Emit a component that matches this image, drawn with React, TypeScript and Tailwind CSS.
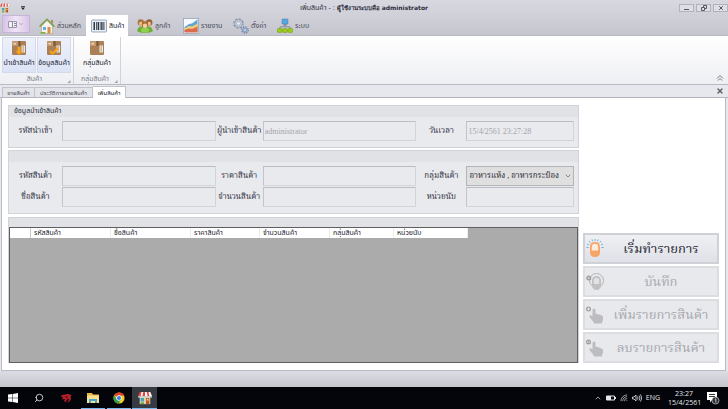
import React, { useState } from 'react';
import { ChevronDown, ChevronUp, Search, X } from 'lucide-react';

const ShopIcon = ({ className }: { className: string }) => (
  <svg viewBox="0 0 16 16" className={className}>
    <path d="M2 6h12v9H2z" fill="#e9dcb8" />
    <path d="M2 1h12l2 5H0z" fill="#e8433f" />
    <path d="M4 1h2L5 6H3zM8 1h2l1 5H8zM12 1h2l2 5h-3z" fill="#fff" />
    <path d="M0 6h16v1.5H0z" fill="#c9d8d2" />
    <path d="M3 8h4v4H3z" fill="#3fa7b5" />
    <path d="M9 8h4v7H9z" fill="#b5572e" />
    <path d="M10 9h2v2h-2z" fill="#ffd36b" />
    <path d="M3 13h4v2H3z" fill="#6f9c3b" />
  </svg>
);

const HouseIcon = () => (
  <svg viewBox="0 0 16 16" className="h-4 w-4">
    <path d="M2.5 8 8 2.5 13.5 8v7.5h-11z" fill="#f6f3ea" stroke="#a5a08f" strokeWidth=".6" />
    <path d="M12 2h2v4l-2-2z" fill="#b9845a" />
    <path d="M.6 8.600 8 1.200l7.400 7.400" fill="none" stroke="#7d9f4c" strokeWidth="1.500" />
    <path d="M8.500 9h3v6.500h-3z" fill="#d88d45" />
    <path d="M4 9h3v3H4z" fill="#62aee3" />
    <path d="M1.500 14h5v1.600h-5z" fill="#79b53d" />
  </svg>
);

const BarcodeIcon = () => (
  <svg viewBox="0 0 16 16" className="h-4 w-4">
    <rect x=".5" y="2" width="15" height="12" rx=".6" fill="#e8eef7" stroke="#8495ad" strokeWidth=".8" />
    <path d="M2.500 4h1.500v8H2.500zM5 4h.8v8H5zM6.600 4h1.400v8H6.600zM8.800 4h.7v8h-.7zM10.200 4h1.400v8h-1.400zM12.400 4h1v8h-1z" fill="#2f3743" />
  </svg>
);

const CustomersIcon = () => (
  <svg viewBox="0 0 16 16" className="h-4 w-4">
    <path d="M1 11c0-2 3-3 7-3s7 1 7 3l1 2c-2 2.500-14 2.500-16 0z" fill="#6fae35" />
    <path d="M4 13c0-3 1.500-3.500 4-3.500s4 .5 4 3.500c-1 2-7 2-8 0z" fill="#91cf52" />
    <circle cx="3.800" cy="4.500" r="3.200" fill="#a97540" />
    <circle cx="12.200" cy="4.500" r="3.200" fill="#9c6436" />
    <circle cx="4" cy="5.800" r="2" fill="#efc08f" />
    <circle cx="12" cy="5.800" r="2" fill="#efc08f" />
    <circle cx="8" cy="6.500" r="3.200" fill="#a96b36" />
    <circle cx="8" cy="7.800" r="2.200" fill="#f8cfa0" />
  </svg>
);

const ReportIcon = () => (
  <svg viewBox="0 0 16 16" className="h-4 w-4">
    <rect x=".5" y=".5" width="15" height="15" fill="#f6f9fd" stroke="#93a4bb" strokeWidth=".8" />
    <path d="M1.500 9 6 6l3-.5 5.500-4V14h-13z" fill="#5ea5d4" />
    <path d="M1.500 10.500 6 8l3 .5 5.500-3V14h-13z" fill="#f1cd77" />
    <path d="M1.500 12 6 10.500l3 .5 5.500-2.500v6h-13z" fill="#dd6a4d" />
  </svg>
);

const GearsIcon = () => (
  <svg viewBox="0 0 16 16" className="h-4 w-4" fill="none">
    <circle cx="5.500" cy="5.500" r="4.600" stroke="#8490a6" strokeWidth="1.400" strokeDasharray="1.900 1.700" />
    <circle cx="5.500" cy="5.500" r="3" stroke="#c3ccda" strokeWidth="2" />
    <circle cx="5.500" cy="5.500" r="4" stroke="#7f8ca3" strokeWidth=".6" />
    <circle cx="5.500" cy="5.500" r="2" fill="#e4e8ef" stroke="#8c98ad" strokeWidth=".5" />
    <circle cx="12" cy="12" r="3.200" stroke="#62789c" strokeWidth="1.200" strokeDasharray="1.300 1.200" />
    <circle cx="12" cy="12" r="2" stroke="#8ba3c9" strokeWidth="1.600" />
  </svg>
);

const NetworkIcon = () => (
  <svg viewBox="0 0 16 16" className="h-4 w-4">
    <path d="M8 6v3M3 11V8.800h10V11" fill="none" stroke="#7b8794" strokeWidth=".9" />
    <rect x="5" y="1" width="6" height="5" rx=".5" fill="#56a8e2" stroke="#4176a8" strokeWidth=".5" />
    <path d="M6 6.500h4v.8H6z" fill="#6f7b88" />
    <rect x=".3" y="10.500" width="4.800" height="4" rx="1.200" fill="#9ccb1c" stroke="#6c9a12" strokeWidth=".5" />
    <rect x="5.600" y="10.500" width="4.800" height="4" rx="1.200" fill="#9ccb1c" stroke="#6c9a12" strokeWidth=".5" />
    <rect x="10.900" y="10.500" width="4.800" height="4" rx="1.200" fill="#9ccb1c" stroke="#6c9a12" strokeWidth=".5" />
  </svg>
);

const BoxIcon = ({ mark }: { mark: 'down' | 'check' | 'none' }) => (
  <svg viewBox="0 0 16 16" className="h-4 w-4">
    <rect x="1" y="1" width="14" height="14" rx="1" fill="#ab8057" />
    <path d="M1 2c0-1 1-1 1-1h5v5H1z" fill="#c39a70" />
    <path d="M7.500 1h2v5h-2z" fill="#7b5737" />
    <path d="M2.500 3h2.500v1.500H2.500z" fill="#ead9c2" />
    <path d="M10.500 5.500h3.500v7h-3.500z" fill="#efe8dc" />
    <path d="M11.500 7h1.500M11.500 9h1.500M11.500 11h1.500" stroke="#7c6650" strokeWidth=".7" />
    {mark === 'down' && <path d="M6.500 7h3v4h2L8 15l-3.500-4h2z" fill="#f7a21b" />}
    {mark === 'check' && <path d="m4.500 10 2 2 5-5 1 2.500-6 5.500-3-3z" fill="#f7a21b" />}
  </svg>
);

const BulbIcon = () => (
  <svg viewBox="0 0 20 20" className="h-5 w-5">
    <path d="M10 0v2M7 .5l.5 1.700M13 .5l-.5 1.700M4 2l1.200 1.500M16 2l-1.200 1.500M2 5l1.800.8M18 5l-1.800.8M1.500 8.500h2M18.500 8.500h-2" stroke="#5aa6cf" strokeWidth=".9" />
    <rect x="5" y="3" width="10" height="15" rx="4.500" fill="#f6a566" />
    <path d="M6.800 8a3.200 3.200 0 0 1 6.400 0v3.500H6.800z" fill="#fdece0" />
  </svg>
);

const PowerIcon = () => (
  <svg viewBox="0 0 20 20" className="h-5 w-5">
    <circle cx="11.500" cy="8.500" r="7" fill="none" stroke="#b4b4b6" />
    <rect x="7" y="4" width="9" height="14" rx="4.500" fill="#c0c0c2" />
    <path d="M8.800 8.500a2.700 2.700 0 0 1 5.400 0V12H8.800z" fill="#e2e2e4" />
    <circle cx="3.800" cy="6" r="2.500" fill="#9a9a9c" />
    <path d="M2.500 6h2.600M3.800 4.700v2.600" stroke="#e6e6e8" strokeWidth=".7" />
  </svg>
);

const HandIcon = ({ add }: { add?: boolean }) => (
  <svg viewBox="0 0 20 20" className="h-5 w-5">
    <path d="M7.500 5c0-1.800 3-1.800 3 0v4c1.700-.5 2.700 0 3 .7 1.500-.4 2.200.2 2.400.9 1.400 0 2.100.6 2.100 1.600v2.300c0 1.500-1 2-1.200 4H9c-.5-2-3.500-5-4.500-6.500-.8-1.300.9-2.200 1.900-1.300l1.100.9z" fill="#bdbdbf" />
    <circle cx="3.500" cy="4" r="2.500" fill="#9f9fa1" />
    <path d={add ? 'M2 4h3M3.500 2.500v3' : 'M2 4h3'} stroke="#ececee" strokeWidth=".9" />
  </svg>
);

const FolderIcon = () => (
  <svg viewBox="0 0 14 14" className="h-3.5 w-3.5">
    <path d="M1 2h5l1 1.500h6V12H1z" fill="#e8b64a" />
    <path d="M1 4.500h12V12H1z" fill="#fbe08c" />
    <path d="M3 12V8h8v4H9v-2H5v2z" fill="#44a6cf" />
  </svg>
);

const ChromeIcon = () => (
  <svg viewBox="0 0 14 14" className="h-3 w-3">
    <circle cx="7" cy="7" r="6.500" fill="#f7cb1c" />
    <path d="M7 7 1.400 3.700A6.500 6.500 0 0 1 13 4.500H7z" fill="#e5402f" />
    <path d="M1.400 3.700A6.500 6.500 0 0 0 6.600 13.500L9.500 8.500 7 7 4.700 9z" fill="#2f9e4f" />
    <circle cx="7" cy="7" r="3.100" fill="#fff" />
    <circle cx="7" cy="7" r="2.400" fill="#3b7ee8" />
  </svg>
);

const DragonIcon = () => (
  <svg viewBox="0 0 14 14" className="h-3.5 w-3.5">
    <path d="M2 5c1-2 3-1 4-1.500s4-1 5.500.5l1.500.5-1.500 1C13 8 11 11 8 11.500c1.500-1.500 2-2.500 1.500-4L7.500 9 7 11.500 5 10l1-2-3.500.5L4 7z" fill="#b01f27" />
    <path d="m6.500 5.500 2.500.3-2 1.200z" fill="#140607" />
  </svg>
);

const ribbonTabs = [
  { label: 'ส่วนหลัก', icon: <HouseIcon />, width: 'w-[48px]' },
  { label: 'สินค้า', icon: <BarcodeIcon />, width: 'w-[42px]' },
  { label: 'ลูกค้า', icon: <CustomersIcon />, width: 'w-[42px]' },
  { label: 'รายงาน', icon: <ReportIcon />, width: 'w-[46px]' },
  { label: 'ตั้งค่า', icon: <GearsIcon />, width: 'w-[40px]' },
  { label: 'ระบบ', icon: <NetworkIcon />, width: 'w-[42px]' },
];

const columns = [
  { label: 'รหัสสินค้า', width: 'w-[80px]' },
  { label: 'ชื่อสินค้า', width: 'w-[80px]' },
  { label: 'ราคาสินค้า', width: 'w-[69px]' },
  { label: 'จำนวนสินค้า', width: 'w-[70px]' },
  { label: 'กลุ่มสินค้า', width: 'w-[64px]' },
  { label: 'หน่วยนับ', width: 'w-[74px]' },
];

const actions = [
  { label: 'เริ่มทำรายการ', icon: <BulbIcon />, disabled: false },
  { label: 'บันทึก', icon: <PowerIcon />, disabled: true },
  { label: 'เพิ่มรายการสินค้า', icon: <HandIcon add />, disabled: true },
  { label: 'ลบรายการสินค้า', icon: <HandIcon />, disabled: true },
];

const Field = ({ id, label, value = '' }: { id: string; label: string; value?: string }) => (
  <>
    <label htmlFor={id} className="text-center font-['Liberation_Serif','Noto_Serif_Thai',serif] text-[8px] whitespace-nowrap text-[#2c2d3c]">{label}</label>
    <input
      id={id}
      disabled
      defaultValue={value}
      className="h-5 w-full min-w-0 border border-[#d3d4d9] border-t-[#bcbdc4] border-l-[#c3c4ca] bg-[#e9eaee] px-px font-['Liberation_Serif',serif] text-[8px] text-[#a3a4aa]"
    />
  </>
);

const RibbonGroup = ({ label, children }: { label: string; children: React.ReactNode }) => (
  <div className="flex flex-col border-r border-[#d2d3da] px-0.5">
    <div className="flex flex-1 justify-center gap-px">{children}</div>
    <div className="flex h-[11px] items-center text-[7px] text-[#7b7c88]">
      <span className="flex-1 text-center">{label}</span>
      <svg viewBox="0 0 4 4" className="h-1 w-1 self-end pb-px"><path d="M4 0v4H0z" fill="#9a9ba5" /></svg>
    </div>
  </div>
);

const RibbonButton = ({ label, mark, active }: { label: string; mark: 'down' | 'check' | 'none'; active?: boolean }) => (
  <button
    className={`flex w-[34px] flex-col items-center gap-0.5 border pt-0.5 text-[7px] whitespace-nowrap text-[#20212e] ${
      active ? 'border-[#d3daea] bg-linear-to-b from-[#eef1fb] to-[#dbe3f6]' : 'border-transparent'
    }`}
  >
    <BoxIcon mark={mark} />
    {label}
  </button>
);

const App: React.FC = () => {
  const [activeTab, setActiveTab] = useState('สินค้า');
  const formGrid = 'grid grid-cols-[53px_10fr_47px_10fr_50px_7fr] items-center pr-1';

  return (
    <div className="flex h-screen flex-col overflow-hidden bg-[#e7e8ed] font-['Liberation_Sans','Noto_Sans_Thai',sans-serif] text-[7px] leading-[10px] text-[#2c2d3c]">
      {/* Title bar */}
      <header className="bg-linear-to-b from-[#d8d8e0] to-[#c5c5ce]">
        <div className="flex h-[15px] items-center">
          <div className="flex flex-1 items-center gap-2.5 self-stretch">
            <ShopIcon className="h-2.5 w-2.5" />
            <svg viewBox="0 0 6 6" className="h-1.5 w-1.5"><path d="M1 1h4v.7H1zM1 2.500h4L3 5z" fill="#22232e" /></svg>
          </div>
          <h1 className="font-normal">เพิ่มสินค้า - : <span className="font-['DejaVu_Sans',sans-serif] text-[6px] font-bold">ผู้ใช้งานระบบคือ administrator</span></h1>
          <div className="flex flex-1 justify-end gap-0.5">
            <button aria-label="ย่อ" className="flex h-2 w-[15px] items-end justify-center border border-[#b1b2bb] bg-[#dedfe5]">
              <svg viewBox="0 0 6 4" className="h-1 w-1.5"><path d="M0 2h5v1H0z" fill="#555662" /></svg>
            </button>
            <button aria-label="คืนขนาด" className="flex h-2 w-[15px] items-center justify-center border border-[#b1b2bb] bg-[#dedfe5]">
              <svg viewBox="0 0 6 6" className="h-1.5 w-1.5" fill="none" stroke="#555662"><path d="M2.500 2V.5h3v3H4M.5 2.500h3v3h-3z" /></svg>
            </button>
            <button aria-label="ปิด" className="flex h-2 w-[15px] items-center justify-center border border-[#b1b2bb] bg-[#dedfe5] text-[#555662]">
              <X className="h-1.5 w-1.5" strokeWidth={4} />
            </button>
          </div>
        </div>
        <nav className="flex h-[21px] items-stretch gap-1 border-b border-[#b9bac3] pl-0.5">
          <button aria-label="เมนู" className="mb-0.5 flex w-7 items-center justify-center gap-px border border-[#c6b5d8] bg-linear-to-r from-[#d6c3e6] via-[#f0e6f7] to-[#d9c4e8] text-[#7c778a]">
            <svg viewBox="0 0 9 7" className="h-[7px] w-[9px]" fill="none"><path d="M.5.5h8v6h-8z" fill="#f4f2f8" stroke="#9a96a8" /><path d="M4.500 1v5M6 2.500h2M6 4.500h2" stroke="#8d899c" /></svg>
            <ChevronDown className="h-1.5 w-1.5" />
          </button>
          {ribbonTabs.map((tab) => (
            <button
              key={tab.label}
              onClick={() => setActiveTab(tab.label)}
              className={`-mb-px flex items-center gap-0.5 pl-[5px] whitespace-nowrap ${tab.width} ${activeTab === tab.label ? 'bg-white text-[#20212e]' : 'text-[#4a4b5a]'}`}
            >
              <span className="shrink-0">{tab.icon}</span>
              {tab.label}
            </button>
          ))}
        </nav>
      </header>

      {/* Ribbon */}
      <section className="flex h-[49px] border-b border-[#b9bac3] bg-linear-to-b from-white to-[#eeeff3] pt-px">
        <RibbonGroup label="สินค้า">
          <RibbonButton label="นำเข้าสินค้า" mark="down" active />
          <RibbonButton label="ข้อมูลสินค้า" mark="check" active />
        </RibbonGroup>
        <RibbonGroup label="กลุ่มสินค้า">
          <div className="px-1"><RibbonButton label="กลุ่มสินค้า" mark="none" /></div>
        </RibbonGroup>
        <button aria-label="ซ่อนริบบอน" className="mr-1 ml-auto self-end pb-0.5 text-[#777884]">
          <svg viewBox="0 0 8 8" className="h-2 w-2" fill="none" stroke="currentColor"><path d="m1 4.500 3-3 3 3M2 6.500l2-2 2 2" /></svg>
        </button>
      </section>

      {/* Document tabs */}
      <div className="flex h-[13px] items-end border-b border-[#b4b5be] pr-1 pl-0.5 text-[6px] text-[#4a4b5a]">
        <button className="h-2.5 w-[33px] border border-b-0 border-[#c1c2ca] bg-[#e3e4e9]">ขายสินค้า</button>
        <button className="h-2.5 w-[58px] border border-b-0 border-l-0 border-[#c1c2ca] bg-[#e3e4e9] whitespace-nowrap">ประวัติการขายสินค้า</button>
        <button className="-mb-px h-3 w-[33px] border border-b-0 border-l-0 border-[#c1c2ca] bg-white text-[#20212e]">เพิ่มสินค้า</button>
        <button aria-label="ปิดแท็บ" className="mb-0.5 ml-auto text-[#5d5e6a]"><X className="h-2 w-2" strokeWidth={4} /></button>
      </div>

      <main className="mr-0.5 ml-px flex min-h-0 flex-1 gap-1 border-x border-b border-[#b9bac3] bg-white px-1.5 py-[7px]">
        <div className="flex min-w-0 flex-1 flex-col gap-0.5">
          <fieldset className="h-[43px] border border-[#d2d3d9] bg-[#e9eaee]">
            <div className="mb-1 h-[11px] bg-[#e1e2e6] pl-[5px]">ข้อมูลนำเข้าสินค้า</div>
            <div className={formGrid}>
              <Field id="import-code" label="รหัสนำเข้า" />
              <Field id="importer" label="ผู้นำเข้าสินค้า" value="administrator" />
              <Field id="date" label="วันเวลา" value="15/4/2561 23:27:28" />
            </div>
          </fieldset>

          <fieldset className="h-[64px] border border-[#d2d3d9] bg-[#e9eaee]">
            <div className="mb-1 h-[11px] bg-[#e1e2e6]" />
            <div className={`${formGrid} gap-y-px`}>
              <Field id="code" label="รหัสสินค้า" />
              <Field id="price" label="ราคาสินค้า" />
              <label htmlFor="group" className="text-center font-['Liberation_Serif','Noto_Serif_Thai',serif] text-[8px] whitespace-nowrap">กลุ่มสินค้า</label>
              <div className="relative min-w-0">
                <select id="group" className="h-5 w-full appearance-none border border-[#b5b5b7] bg-[#dfdfdf] pl-0.5 font-['Liberation_Serif','Noto_Serif_Thai',serif] text-[8px] text-[#22232e]">
                  <option>อาหารแห้ง , อาหารกระป๋อง</option>
                </select>
                <ChevronDown className="pointer-events-none absolute top-1.5 right-0.5 h-2 w-2 text-[#555]" />
              </div>
              <Field id="name" label="ชื่อสินค้า" />
              <Field id="amount" label="จำนวนสินค้า" />
              <Field id="unit" label="หน่วยนับ" />
            </div>
          </fieldset>

          <section className="mt-px flex min-h-0 flex-1 flex-col border border-b-0 border-[#d2d3d9]">
            <div className="h-[9px] shrink-0 bg-[#e1e2e6]" />
            <div className="flex-1 border border-[#5f5f61] bg-[#ababab]">
              <table className="border-separate border-spacing-0 bg-white text-left">
                <thead>
                  <tr className="h-2.5">
                    <td className="w-[21px] border-r border-[#c9c9cb] p-0" />
                    {columns.map((col) => (
                      <th key={col.label} scope="col" className={`border-r border-[#ececee] p-0 pl-[3px] font-normal whitespace-nowrap text-[#20212e] ${col.width}`}>
                        {col.label}
                      </th>
                    ))}
                  </tr>
                </thead>
              </table>
            </div>
          </section>
        </div>

        <aside className="flex w-[136px] flex-col justify-end gap-0.5">
          {actions.map((action) => (
            <button
              key={action.label}
              disabled={action.disabled}
              className={`flex h-[31px] items-center border-2 font-['Liberation_Serif','Noto_Serif_Thai',serif] text-[13px] leading-5 whitespace-nowrap ${
                action.disabled ? 'border-[#dcdde1] bg-[#e8e9ed] text-[#a6a7ad]' : 'border-[#d0d1d6] bg-linear-to-b from-[#eff0f3] to-[#dfe1e8] text-[#22232e]'
              }`}
            >
              {action.icon}
              <span className="flex-1 text-center">{action.label}</span>
            </button>
          ))}
        </aside>
      </main>

      <div className="h-4 shrink-0 bg-linear-to-b from-[#dcdce3] to-[#c6c6cf]" />

      {/* Taskbar */}
      <footer className="flex h-[22px] shrink-0 items-stretch bg-[#03050b] text-[#e6e7ea]">
        <button aria-label="Start" className="flex w-[26px] items-center justify-center">
          <svg viewBox="0 0 10 10" className="h-2.5 w-2.5"><path d="M0 1.500 4.500 1v3.700H0zM5 .9 10 0v4.700H5zM0 5.200h4.500V9L0 8.500zM5 5.200h5V10l-5-.9z" fill="#fff" /></svg>
        </button>
        <button aria-label="Search" className="flex w-[26px] items-center justify-center"><Search className="h-2.5 w-2.5 -scale-x-100" /></button>
        <button aria-label="Game" className="flex w-[28px] items-center justify-center"><DragonIcon /></button>
        <button aria-label="Explorer" className="mx-px flex w-6 items-center justify-center border-b border-[#76b9ed]"><FolderIcon /></button>
        <button aria-label="Chrome" className="mx-px flex w-6 items-center justify-center border-b border-[#76b9ed]"><ChromeIcon /></button>
        <button aria-label="Shop" className="flex w-[25px] items-center justify-center border-b border-[#76b9ed] bg-[#363a42]"><ShopIcon className="h-3.5 w-3.5" /></button>
        <div className="ml-auto flex items-center gap-1 pr-2 font-['Open_Sans','Noto_Sans',sans-serif]">
          <ChevronUp className="h-2 w-2" />
          <svg viewBox="0 0 10 8" className="h-2 w-2.5"><path d="M.5 2h8v4h-8z" fill="none" stroke="#e6e7ea" /><path d="M1 2h4v4H1zM9 3h1v2H9z" fill="#e6e7ea" /></svg>
          <svg viewBox="0 0 9 9" className="h-2 w-2" fill="none" stroke="#b9bbc0" strokeWidth=".9"><path d="M1 8a7 7 0 0 1 7-7M3 8a5 5 0 0 1 5-5M5 8a3 3 0 0 1 3-3M7 8l1-1" /></svg>
          <svg viewBox="0 0 10 8" className="h-2 w-2.5" fill="none" stroke="#e6e7ea" strokeWidth=".8"><path d="M.5 3H2l2-2v6L2 5H.500zM5.500 2.500q1 1.500 0 3M7 1.500q2 2.500 0 5M8.500.5q2.500 3.500 0 7" /></svg>
          <span>ENG</span>
          <div className="ml-1 w-8 text-center leading-[9px]">
            <div>23:27</div>
            <div>15/4/2561</div>
          </div>
          <svg viewBox="0 0 14 14" className="ml-0.5 h-3.5 w-3.5">
            <path d="M1 1h10v8H6l-2 2.500V9H1z" fill="#fff" />
            <path d="M3 3.500h6M3 5.500h6" stroke="#03050b" strokeWidth=".8" />
            <circle cx="9.500" cy="9.500" r="3.500" fill="#2b2e36" stroke="#c9cacd" strokeWidth=".7" />
            <path d="m8.800 8.500 1-.8V11.500" fill="none" stroke="#fff" strokeWidth=".7" />
          </svg>
        </div>
      </footer>
    </div>
  );
};

export default App;
